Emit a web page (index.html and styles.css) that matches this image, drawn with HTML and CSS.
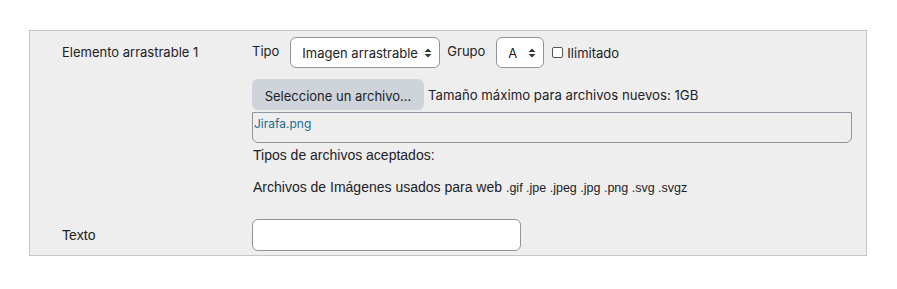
FILE: index.html
```html
<!DOCTYPE html>
<html lang="es">

<head>
    <meta charset="UTF-8">
    <title>Elemento arrastrable</title>
    <link rel="stylesheet" href="styles.css">
</head>

<body>
    <div class="panel">
        <div class="row">
            <div class="label">Elemento arrastrable 1</div>
            <div class="content">
                <div class="line">
                    <span class="tag">Tipo</span>
                    <div class="select wide">
                        <span>Imagen arrastrable</span>
                        <svg width="8" height="10" viewBox="0 0 8 10"><path d="M4 0.5L7.5 4H0.5Z M4 9.5L0.5 6H7.5Z" fill="#343a40"/></svg>
                    </div>
                    <span class="tag">Grupo</span>
                    <div class="select small">
                        <span>A</span>
                        <svg width="8" height="10" viewBox="0 0 8 10"><path d="M4 0.5L7.5 4H0.5Z M4 9.5L0.5 6H7.5Z" fill="#343a40"/></svg>
                    </div>
                    <label class="check"><input type="checkbox"> Ilimitado</label>
                </div>
                <div class="upload">
                    <button class="pick">Seleccione un archivo...</button>
                    <span class="maxsize">Tamaño máximo para archivos nuevos: 1GB</span>
                </div>
                <div class="files">Jirafa.png</div>
                <p class="types">Tipos de archivos aceptados:</p>
                <p class="types list">Archivos de Imágenes usados para web <small>.gif .jpe .jpeg .jpg .png .svg .svgz</small></p>
            </div>
        </div>
        <div class="row last">
            <div class="label plain">Texto</div>
            <div class="content">
                <input class="text" type="text">
            </div>
        </div>
    </div>
</body>

</html>
```

FILE: styles.css
```css
body {
    margin: 0;
    background-color: #fff;
    font-family: "Inter", "Liberation Sans", sans-serif;
    color: #1d2125;
}

p {
    margin: 0;
}

.panel {
    width: 838px;
    box-sizing: border-box;
    margin: 30px 0 0 29px;
    background-color: #eeeeee;
    border: 1px solid #c6c6c6;
    padding: 6px 0 4px 0;
}

.row {
    display: grid;
    grid-template-columns: 190px 599px;
    padding-left: 32px;
}

.row.last {
    margin-top: 22px;
}

.label {
    font-size: 13px;
    padding-top: 7px;
}

.label.plain {
    font-family: "Liberation Sans", sans-serif;
    font-size: 14px;
    padding-top: 8px;
}

.line {
    display: flex;
    align-items: center;
    height: 31px;
}

.tag {
    font-size: 13px;
    margin: -3px 11px 0 0;
}

.select {
    box-sizing: border-box;
    height: 31px;
    border: 1px solid #8f959e;
    border-radius: 6px;
    background-color: #fff;
    display: flex;
    align-items: center;
    justify-content: space-between;
    padding: 0 7px 0 11px;
    font-size: 13px;
    margin-right: 7px;
}

.select.wide {
    width: 150px;
}

.select.small {
    width: 48px;
}

.check {
    display: flex;
    align-items: center;
    font-size: 13px;
    margin-left: 1px;
}

.check input {
    appearance: none;
    width: 11px;
    height: 11px;
    margin: 0 4px 0 0;
    border: 1px solid #555;
    border-radius: 2px;
    background-color: #fff;
}

.upload {
    display: flex;
    align-items: center;
    margin-top: 11px;
}

.pick {
    border: 0;
    height: 31px;
    width: 172px;
    border-radius: 6px;
    background-color: #ced4da;
    font-family: inherit;
    font-size: 13px;
    color: #1d2125;
    padding: 2px 0 0 0;
    margin-right: 4px;
}

.maxsize {
    font-size: 13.2px;
}

.files {
    box-sizing: border-box;
    margin-top: 2px;
    height: 31px;
    width: 600px;
    border: 1px solid #8f959e;
    border-radius: 0 0 6px 6px;
    font-size: 12px;
    color: #1a6b8c;
    padding: 3px 0 0 1px;
}

.types {
    font-family: "Liberation Sans", sans-serif;
    font-size: 14px;
    margin-top: 3px;
    padding-left: 1px;
    line-height: 18px;
}

.types.list {
    margin-top: 14px;
}

.types small {
    font-size: 12.5px;
}

.text {
    box-sizing: border-box;
    width: 269px;
    height: 32px;
    border: 1px solid #8f959e;
    border-radius: 6px;
    background-color: #fff;
}
```
